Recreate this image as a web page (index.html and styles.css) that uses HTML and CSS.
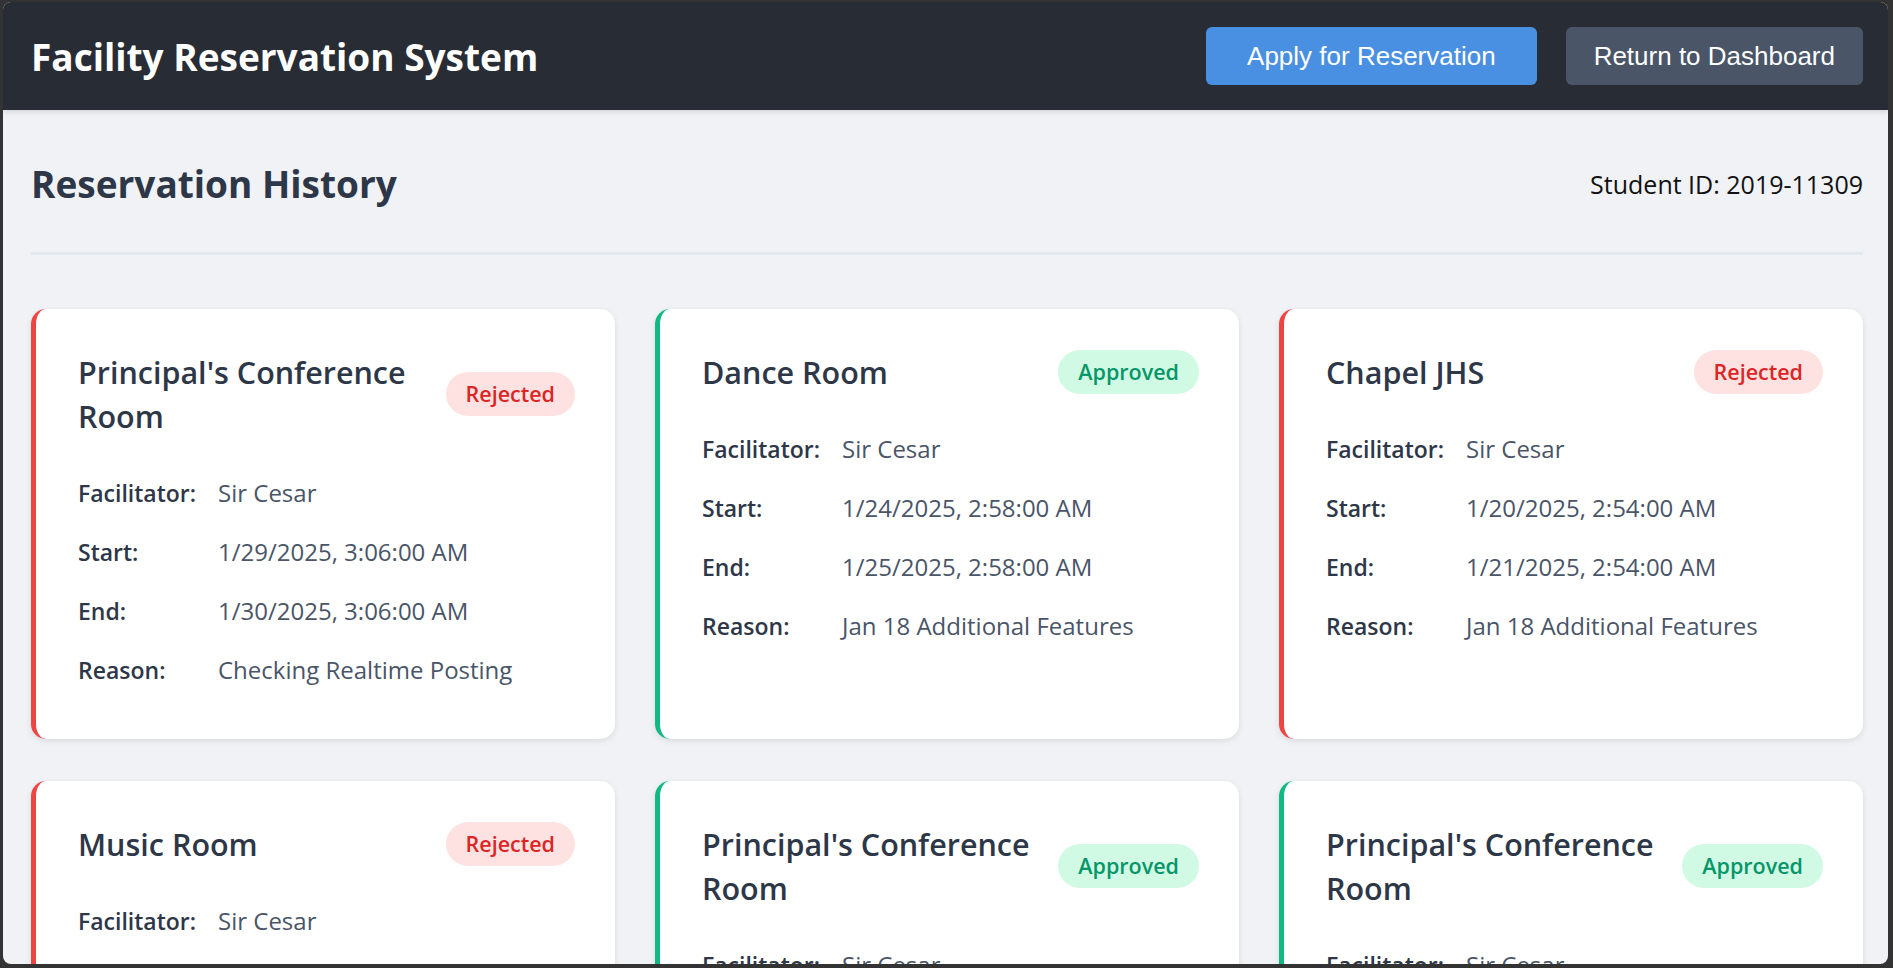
FILE: index.html
```html
<!DOCTYPE html>
<html lang="en">
<head>
<meta charset="utf-8">
<title>Facility Reservation System</title>
<link rel="stylesheet" href="styles.css">
</head>
<body>
<div class="app">
  <header class="topbar">
    <h1 class="brand">Facility Reservation System</h1>
    <nav class="actions">
      <button class="btn btn-primary">Apply for Reservation</button>
      <button class="btn btn-secondary">Return to Dashboard</button>
    </nav>
  </header>
  <main class="main">
    <div class="page-head">
      <h2 class="page-title">Reservation History</h2>
      <div class="student-id">Student ID: 2019-11309</div>
    </div>
    <section class="grid">
      <article class="card card-rejected">
        <div class="card-head">
          <h3 class="card-title">Principal's Conference Room</h3>
          <span class="badge badge-rejected">Rejected</span>
        </div>
        <dl class="details">
          <div class="row"><dt>Facilitator:</dt><dd>Sir Cesar</dd></div>
          <div class="row"><dt>Start:</dt><dd>1/29/2025, 3:06:00 AM</dd></div>
          <div class="row"><dt>End:</dt><dd>1/30/2025, 3:06:00 AM</dd></div>
          <div class="row"><dt>Reason:</dt><dd>Checking Realtime Posting</dd></div>
        </dl>
      </article>
      <article class="card card-approved">
        <div class="card-head">
          <h3 class="card-title">Dance Room</h3>
          <span class="badge badge-approved">Approved</span>
        </div>
        <dl class="details">
          <div class="row"><dt>Facilitator:</dt><dd>Sir Cesar</dd></div>
          <div class="row"><dt>Start:</dt><dd>1/24/2025, 2:58:00 AM</dd></div>
          <div class="row"><dt>End:</dt><dd>1/25/2025, 2:58:00 AM</dd></div>
          <div class="row"><dt>Reason:</dt><dd>Jan 18 Additional Features</dd></div>
        </dl>
      </article>
      <article class="card card-rejected">
        <div class="card-head">
          <h3 class="card-title">Chapel JHS</h3>
          <span class="badge badge-rejected">Rejected</span>
        </div>
        <dl class="details">
          <div class="row"><dt>Facilitator:</dt><dd>Sir Cesar</dd></div>
          <div class="row"><dt>Start:</dt><dd>1/20/2025, 2:54:00 AM</dd></div>
          <div class="row"><dt>End:</dt><dd>1/21/2025, 2:54:00 AM</dd></div>
          <div class="row"><dt>Reason:</dt><dd>Jan 18 Additional Features</dd></div>
        </dl>
      </article>
      <article class="card card-rejected">
        <div class="card-head">
          <h3 class="card-title">Music Room</h3>
          <span class="badge badge-rejected">Rejected</span>
        </div>
        <dl class="details">
          <div class="row"><dt>Facilitator:</dt><dd>Sir Cesar</dd></div>
        </dl>
      </article>
      <article class="card card-approved">
        <div class="card-head">
          <h3 class="card-title">Principal's Conference Room</h3>
          <span class="badge badge-approved">Approved</span>
        </div>
        <dl class="details">
          <div class="row"><dt>Facilitator:</dt><dd>Sir Cesar</dd></div>
        </dl>
      </article>
      <article class="card card-approved">
        <div class="card-head">
          <h3 class="card-title">Principal's Conference Room</h3>
          <span class="badge badge-approved">Approved</span>
        </div>
        <dl class="details">
          <div class="row"><dt>Facilitator:</dt><dd>Sir Cesar</dd></div>
        </dl>
      </article>
    </section>
  </main>
</div>
</body>
</html>
```
FILE: styles.css
```css
* { box-sizing: border-box; }

html, body {
  margin: 0;
  height: 100%;
}

body {
  background: #333333;
  padding: 2px 5px 4px 3px;
  font-family: "Open Sans", "Noto Sans", sans-serif;
  overflow: hidden;
}

.app {
  height: 962px;
  background: #f0f2f5;
  border-radius: 8px;
  overflow: hidden;
}

.topbar {
  height: 108px;
  background: #282c34;
  display: flex;
  align-items: center;
  justify-content: space-between;
  padding: 0 25px 0 28px;
  box-shadow: 0 2px 5px rgba(0, 0, 0, 0.12);
  position: relative;
}

.brand {
  margin: 0;
  color: #ffffff;
  font-size: 37px;
  font-weight: 700;
  line-height: 1;
}

.actions {
  display: flex;
  gap: 29px;
}

.btn {
  height: 58px;
  border: none;
  border-radius: 6px;
  color: #ffffff;
  font-family: "Liberation Sans", Arial, sans-serif;
  font-size: 26px;
  cursor: pointer;
}

.btn-primary {
  background: #4a90e2;
  padding: 0 41px;
}

.btn-secondary {
  background: #4a5568;
  padding: 0 28px;
}

.main {
  padding: 0 25px 0 28px;
}

.page-head {
  display: flex;
  align-items: center;
  justify-content: space-between;
  padding: 47px 0 41px;
  border-bottom: 3px solid #e2e8f0;
}

.page-title {
  margin: 0;
  font-size: 37px;
  font-weight: 700;
  line-height: 54px;
  color: #2d3748;
}

.student-id {
  font-size: 25px;
  color: #111111;
}

.grid {
  margin-top: 54px;
  display: grid;
  grid-template-columns: repeat(3, 1fr);
  gap: 42px 40px;
}

.card {
  background: #ffffff;
  border-radius: 15px;
  border-left: 5px solid transparent;
  box-shadow: 0 2px 6px rgba(0, 0, 0, 0.1);
  padding: 41px 40px 51px 42px;
}

.card-rejected { border-left-color: #ef4444; }
.card-approved { border-left-color: #10b981; }

.card-head {
  display: flex;
  align-items: center;
  justify-content: space-between;
  gap: 10px;
  margin-bottom: 37px;
}

.card-title {
  margin: 0;
  font-size: 30.5px;
  font-weight: 600;
  line-height: 44px;
  color: #2d3748;
}

.badge {
  flex-shrink: 0;
  height: 44px;
  line-height: 44px;
  padding: 0 20px;
  border-radius: 22px;
  font-size: 21.5px;
  font-weight: 600;
}

.badge-rejected {
  background: #fee2e2;
  color: #dc2626;
}

.badge-approved {
  background: #d1fae5;
  color: #059669;
}

.details {
  margin: 0;
  display: flex;
  flex-direction: column;
  gap: 23px;
}

.row {
  display: flex;
  line-height: 36px;
  font-size: 24px;
}

.row dt {
  width: 140px;
  flex-shrink: 0;
  font-size: 23px;
  font-weight: 600;
  color: #2d3748;
}

.row dd {
  margin: 0;
  color: #4a5568;
}
```
